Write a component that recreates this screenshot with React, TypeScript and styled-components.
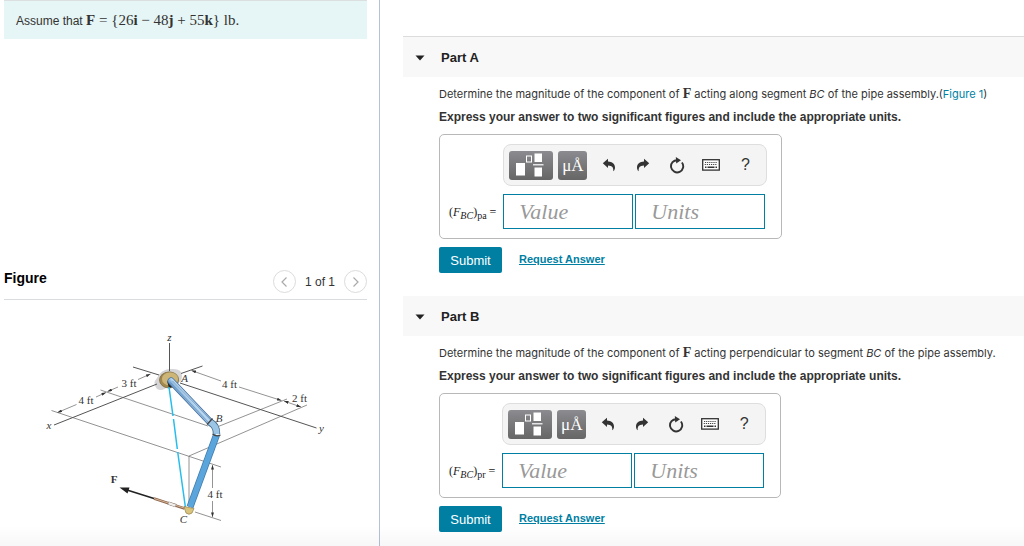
import React from "react";
import styled, { createGlobalStyle, css } from "styled-components";

const sans = `"Liberation Sans", Arial, Helvetica, sans-serif`;
const copy = `Inter, "Liberation Sans", Arial, sans-serif`;
const serif = `"Liberation Serif", "Times New Roman", Times, serif`;
const teal = "#007fa3";

const GlobalStyle = createGlobalStyle`
  *, *::before, *::after { box-sizing: border-box; }
  body {
    margin: 0;
    background: #fff;
    color: #333;
    font: 12px/16px ${sans};
  }
  h2, h3, p, figure { margin: 0; }
  button, input { font-family: inherit; }
`;

const Page = styled.div`
  display: grid;
  grid-template-columns: 380px minmax(0, 1fr);
  min-height: 100vh;
  overflow: hidden;

  &::after {
    content: "";
    position: fixed;
    inset: auto 0 0 0;
    height: 20px;
    pointer-events: none;
    background: linear-gradient(rgba(0, 0, 0, 0), rgba(0, 0, 0, 0.03));
  }
`;

const Aside = styled.aside`
  display: flex;
  flex-direction: column;
  border-right: 1px solid #b4c2d4;
  padding: 0 12px 0 4px;
`;

const Assumption = styled.div`
  height: 39px;
  flex: none;
  padding: 11px 12px;
  line-height: 18px;
  border-top: 1px solid #dcdfdf;
  background: #e6f5f5;
`;

const MathText = styled.span<{ $size?: number }>`
  font-family: ${serif};
  font-size: ${(p) => p.$size ?? 15}px;
  line-height: 16px;
`;

const FigureHeader = styled.header`
  display: flex;
  align-items: center;
  justify-content: space-between;
  height: 36px;
  margin-top: 225px;
  border-bottom: 1px solid #d9dddf;
`;

const FigureTitle = styled.h2`
  color: #000;
  font-size: 14px;
  line-height: 20px;
  padding-bottom: 8px;
`;

const Pager = styled.nav`
  display: flex;
  align-items: center;
  gap: 9px;
`;

const PagerButton = styled.button`
  display: grid;
  place-items: center;
  width: 23px;
  height: 23px;
  padding: 0;
  border: 1px solid #dcdcdc;
  border-radius: 50%;
  background: #fff;
`;

const Drawing = styled.svg`
  display: block;
  width: 100%;
  margin-top: 30px;
  font-family: ${serif};
  font-size: 11px;
`;

const Main = styled.main`
  padding: 36px 0 14px 23px;
`;

const Section = styled.section`
  & + & {
    margin-top: 23px;
  }
`;

const SectionHeader = styled.header<{ $ruled?: boolean }>`
  display: flex;
  align-items: center;
  gap: 16px;
  height: ${(p) => (p.$ruled ? 41 : 40)}px;
  padding: 2px 0 0 12px;
  background: #f8f8f8;
  ${(p) =>
    p.$ruled &&
    css`
      border-top: 1px solid #dcdcdc;
    `}
`;

const Toggle = styled.button`
  display: flex;
  padding: 0;
  border: 0;
  background: none;
`;

const SectionTitle = styled.h3`
  color: #222;
  font-size: 13px;
  line-height: 16px;
`;

const Body = styled.div`
  padding: 9px 0 0 36px;
`;

const Prompt = styled.p`
  font-family: ${copy};
  font-size: 11px;
  white-space: nowrap;
`;

const Instruction = styled.p`
  padding: 7px 0 9px;
  font-weight: bold;
  white-space: nowrap;
`;

const FigureLink = styled.a`
  color: ${teal};
  text-decoration: none;
`;

const AnswerBox = styled.div`
  display: grid;
  grid-template-columns: auto auto;
  gap: 8px 7px;
  width: max-content;
  padding: 9px 14px 9px 9px;
  border: 1px solid #b8b8b8;
  border-radius: 5px;
`;

const Toolbar = styled.div`
  grid-column: 2;
  display: flex;
  align-items: center;
  width: 264px;
  height: 42px;
  padding: 0 4px 0 5px;
  border: 1px solid #dedede;
  border-radius: 8px;
  background: #f4f4f4;
`;

const FormatButton = styled.button<{ $wide?: boolean }>`
  display: grid;
  place-items: center;
  width: ${(p) => (p.$wide ? 44 : 29)}px;
  height: 29px;
  margin-right: 5px;
  padding: 0;
  border: 0;
  border-radius: 3px;
  background: linear-gradient(#8b8b90, #666);
  color: #fff;
  font-family: ${serif};
  font-size: 17px;
  line-height: 29px;
`;

const ToolButton = styled.button`
  display: grid;
  place-items: center;
  flex: 1;
  height: 29px;
  padding: 0;
  border: 0;
  background: none;
  color: #333;
  font-size: 16px;
`;

const Symbol = styled.label`
  align-self: center;
  font-family: ${serif};
  font-size: 12px;
  line-height: 16px;
  white-space: nowrap;
  color: #222;

  sub {
    font-size: 10px;
    line-height: 0;
  }
`;

const Fields = styled.div`
  display: flex;
  gap: 2px;
`;

const Field = styled.input`
  width: 130px;
  height: 35px;
  padding: 0 15px;
  border: 1px solid ${teal};
  background: #fff;
  color: #333;
  font-family: ${serif};
  font-size: 22px;
  border-radius: 0;

  &::placeholder {
    color: #999;
    font-style: italic;
    opacity: 1;
  }
`;

const Actions = styled.div`
  display: flex;
  align-items: center;
  gap: 17px;
  padding-top: 8px;
`;

const Submit = styled.button`
  width: 63px;
  height: 26px;
  padding: 0;
  border: 0;
  border-radius: 2px;
  background: ${teal};
  color: #fff;
  font-size: 13px;
`;

const RequestLink = styled.a`
  color: ${teal};
  font-size: 11px;
  font-weight: bold;
  line-height: 14px;
  padding-bottom: 2px;
`;

const Undo = ({ flip = false }: { flip?: boolean }) => (
  <svg width="14" height="14" viewBox="0 0 14 14" aria-hidden="true">
    <path
      transform={flip ? "translate(14 0) scale(-1 1)" : undefined}
      fill="#333"
      d="M0.8 5.2 6 0.8v2.6c4.2.2 7 2.4 7 6 0 1.600-.7 3-1.700 3.900.3-3.500-.8-5.700-5.300-5.800v2.500z"
    />
  </svg>
);

const Reset = () => (
  <svg width="16" height="17" viewBox="0 0 16 17" aria-hidden="true">
    <path d="M8.500 3.200A6.100 6.100 0 1 0 12.900 5.500" fill="none" stroke="#333" strokeWidth="1.900" />
    <path d="M6.800 0 12 3.300 7.200 6.400z" fill="#333" />
  </svg>
);

const Keyboard = () => (
  <svg width="18" height="12" viewBox="0 0 18 12" aria-hidden="true">
    <rect x="0.7" y="0.700" width="16.600" height="10.400" fill="#fff" stroke="#333" strokeWidth="1.300" />
    <path d="M3 3.500h12.500M2.700 5.500h12.500" stroke="#444" strokeWidth="1.200" strokeDasharray="1.200 0.9" />
    <path d="M3 8.300h1.500M5.500 8.300h7M13.500 8.300H15" stroke="#333" strokeWidth="1.400" />
  </svg>
);

const Templates = () => (
  <svg width="30" height="25" viewBox="0 0 30 25" aria-hidden="true">
    <path d="M0 10h9v12.500H0zM18.500 0.500h7.500v8.500h-7.500zM18.500 14.500h7.500v9h-7.500z" fill="#fff" />
    <path d="M17 11.800h10.500" stroke="#fff" strokeWidth="1.200" />
    <rect x="10.500" y="3" width="5" height="6" fill="none" stroke="#fff" />
  </svg>
);

const Chevron = ({ next = false }: { next?: boolean }) => (
  <svg width="8" height="12" viewBox="0 0 8 12" aria-hidden="true">
    <path d={next ? "M1.500 1.500 6 6 1.500 10.500" : "M6.500 1.500 2 6l4.500 4.500"} fill="none" stroke="#aaa" strokeWidth="1.200" />
  </svg>
);

const PipeDrawing = () => (
  <Drawing viewBox="4 330 363 200" role="img" aria-label="Pipe assembly A, B, C with force F at C">
    <defs>
      <marker id="tip" viewBox="0 0 6 4" refX="6" refY="2" markerUnits="userSpaceOnUse" markerWidth="5" markerHeight="3" orient="auto-start-reverse">
        <path d="M0 0 6 2 0 4z" fill="#333" />
      </marker>
      <linearGradient id="pipe" gradientUnits="userSpaceOnUse" x1="187" y1="404" x2="195" y2="397">
        <stop offset="0" stopColor="#5f94c8" />
        <stop offset="0.500" stopColor="#bddaf2" />
        <stop offset="1" stopColor="#6496c8" />
      </linearGradient>
    </defs>

    <path d="M157 389q-5-6 0-11 4-9 14-9 11-1 11 7 0 6-6 9l-8 1q-5 6-11 3" fill="#d5d5d7" />

    <g fill="none" stroke="#777" strokeWidth="0.800">
      <path d="M100.500 390 208 426M51.500 410.500 221 467M217 427 287 399M307 405 189 456V507M195 512 221 520.500" />
    </g>
    <g fill="none" stroke="#555">
      <path d="M169.500 343v28M133 367l26 8M157 384 54 425M181 373.500 202.500 366M180 383 316.500 428" />
    </g>
    <g fill="none" stroke="#666" strokeWidth="0.700">
      <path d="M138 379.500 150.500 374" markerEnd="url(#tip)" />
      <path d="M118 387 107.500 391.500" markerEnd="url(#tip)" />
      <path d="M96 397 106 392.500" markerEnd="url(#tip)" />
      <path d="M76.500 404.500 57.500 412.500" markerEnd="url(#tip)" />
      <path d="M221 381 191.500 370.500" markerEnd="url(#tip)" />
      <path d="M239 387 281.500 400.500" markerEnd="url(#tip)" />
      <path d="M284 401 301 407" markerStart="url(#tip)" markerEnd="url(#tip)" />
      <path d="M212.500 488V465" markerEnd="url(#tip)" />
      <path d="M212.500 501V517" markerEnd="url(#tip)" />
    </g>

    <ellipse cx="169" cy="380" rx="9.500" ry="8" fill="#a48a4e" stroke="#746238" strokeWidth="0.700" />
    <ellipse cx="170" cy="379" rx="8.500" ry="7" fill="#ccb577" stroke="#80703f" strokeWidth="0.500" />
    <path d="M167 381 175 386 169 388z" fill="#222" />

    <path d="M169 387 173 416M173.500 419 177.300 449M177.700 452 185.500 508" stroke="#25bdec" strokeWidth="1.500" />

    <path d="M171 381 211 423" stroke="#456f9c" strokeWidth="7" strokeLinecap="round" />
    <path d="M171 381 211 423" stroke="url(#pipe)" strokeWidth="5.600" strokeLinecap="round" />
    <path d="M170.500 382.500 210 424M172.500 381 212 421" stroke="#5e89b3" strokeWidth="0.600" />
    <path d="M216.500 435 190 507" stroke="#3d78aa" strokeWidth="7" />
    <path d="M216.500 435 190 507" stroke="#5aa5dc" strokeWidth="5.600" />
    <path d="M210 422q7 4 6.500 12" fill="none" stroke="#456f8e" strokeWidth="7.500" />
    <path d="M210 422q7 4 6.500 12" fill="none" stroke="#9cc5e5" strokeWidth="5.800" />
    <path d="M207 424.500 212.500 418.500M212.500 434q4 3 8 1" fill="none" stroke="#444" strokeWidth="1.300" />

    <path d="M184.500 508.500 154 498.500" stroke="#8e6850" strokeWidth="2.500" />
    <path d="M184 508 154 498.500" stroke="#d4b395" strokeWidth="1" />
    <path d="M176 505.700 168 503" stroke="#8e7a6c" strokeWidth="3.400" />
    <path d="M175.500 505.600 168.500 503.200" stroke="#eee" strokeWidth="2.400" />
    <path d="M154 498.500 127 490" stroke="#222" strokeWidth="1.600" />
    <path d="M119.500 487.500 129.500 487.500 127.500 493.500z" fill="#222" />
    <path d="M184 506.500 194 508.500 192 513q-3 2.500-6 0z" fill="#d9c47d" stroke="#94804a" strokeWidth="0.700" />

    <g fill="#333" textAnchor="middle">
      <text x="129" y="387">3 ft</text>
      <text x="86" y="404">4 ft</text>
      <text x="229.500" y="388">4 ft</text>
      <text x="299.500" y="402">2 ft</text>
      <text x="215" y="498">4 ft</text>
      <g fontStyle="italic">
        <text x="169.500" y="341">z</text>
        <text x="49" y="429">x</text>
        <text x="321.500" y="432">y</text>
        <text x="184.500" y="382">A</text>
        <text x="219" y="422">B</text>
        <text x="183.500" y="523">C</text>
      </g>
      <text x="114" y="483" fontWeight="bold">F</text>
    </g>
  </Drawing>
);

type PartProps = {
  id: string;
  title: string;
  ruled?: boolean;
  subscript: string;
  children: React.ReactNode;
};

const Part = ({ id, title, ruled, subscript, children }: PartProps) => (
  <Section>
    <SectionHeader $ruled={ruled}>
      <Toggle type="button" aria-label={`Collapse ${title}`}>
        <svg width="10" height="6" viewBox="0 0 10 6" aria-hidden="true">
          <path d="M0.500 0.500h9L5 5.500z" fill="#222" />
        </svg>
      </Toggle>
      <SectionTitle>{title}</SectionTitle>
    </SectionHeader>
    <Body>
      <Prompt>{children}</Prompt>
      <Instruction>Express your answer to two significant figures and include the appropriate units.</Instruction>
      <AnswerBox>
        <Toolbar role="toolbar" aria-label="Answer tools">
          <FormatButton type="button" $wide aria-label="Templates">
            <Templates />
          </FormatButton>
          <FormatButton type="button">μÅ</FormatButton>
          <ToolButton type="button" aria-label="Undo"><Undo /></ToolButton>
          <ToolButton type="button" aria-label="Redo"><Undo flip /></ToolButton>
          <ToolButton type="button" aria-label="Reset"><Reset /></ToolButton>
          <ToolButton type="button" aria-label="Keyboard"><Keyboard /></ToolButton>
          <ToolButton type="button">?</ToolButton>
        </Toolbar>
        <Symbol htmlFor={`${id}-value`}>
          (<i>F</i><sub><i>BC</i></sub>)<sub>{subscript}</sub> =
        </Symbol>
        <Fields>
          <Field id={`${id}-value`} placeholder="Value" />
          <Field aria-label="Units" placeholder="Units" />
        </Fields>
      </AnswerBox>
      <Actions>
        <Submit type="button">Submit</Submit>
        <RequestLink href="#request">Request Answer</RequestLink>
      </Actions>
    </Body>
  </Section>
);

export default function App() {
  return (
    <>
      <GlobalStyle />
      <Page>
        <Aside>
          <Assumption>
            Assume that{" "}
            <MathText>
              <b>F</b> = {"{"}26<b>i</b> − 48<b>j</b> + 55<b>k</b>{"}"} lb.
            </MathText>
          </Assumption>
          <FigureHeader>
            <FigureTitle>Figure</FigureTitle>
            <Pager aria-label="Figure pages">
              <PagerButton type="button" aria-label="Previous figure"><Chevron /></PagerButton>
              <span>1 of 1</span>
              <PagerButton type="button" aria-label="Next figure"><Chevron next /></PagerButton>
            </Pager>
          </FigureHeader>
          <figure>
            <PipeDrawing />
          </figure>
        </Aside>
        <Main>
          <Part id="part-a" title="Part A" ruled subscript="pa">
            Determine the magnitude of the component of <MathText $size={14}><b>F</b></MathText> acting along segment <i>BC</i> of
            the pipe assembly.(<FigureLink href="#figure">Figure 1</FigureLink>)
          </Part>
          <Part id="part-b" title="Part B" subscript="pr">
            Determine the magnitude of the component of <MathText $size={14}><b>F</b></MathText> acting perpendicular to
            segment <i>BC</i> of the pipe assembly.
          </Part>
        </Main>
      </Page>
    </>
  );
}
